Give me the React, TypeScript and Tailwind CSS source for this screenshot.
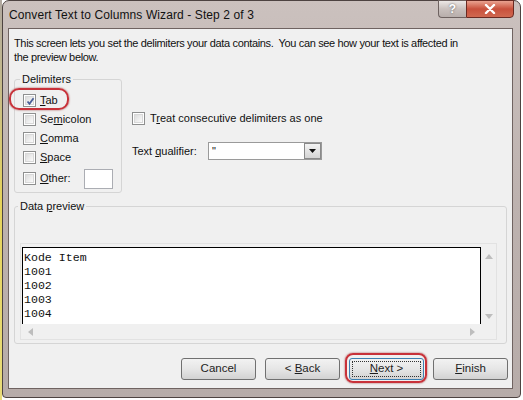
import React from "react";

const ui = { fontFamily: '"Liberation Sans", Arial, sans-serif' };
const mono = { fontFamily: '"Liberation Mono", "Courier New", monospace' };

const Check = ({ checked = false }: { checked?: boolean }) => (
  <div className="w-[13px] h-[13px] shrink-0 border border-[#8e8f8f] bg-white p-[1px]">
    <div className="w-full h-full border border-[#d8d8d8] bg-gradient-to-br from-[#dcdcdc] to-[#fbfbfb] relative">
      {checked && (
        <svg viewBox="0 0 9 9" className="absolute inset-0 w-[9px] h-[9px]">
          <path d="M1.5 4.5 L3.5 6.8 L7.5 1.2" fill="none" stroke="#4a5f97" strokeWidth="1.8" />
        </svg>
      )}
    </div>
  </div>
);

const Btn = ({ children, focus = false }: { children: React.ReactNode; focus?: boolean }) => (
  <div
    className={`w-[75px] h-[22px] rounded-[3px] border ${focus ? "border-[#3c7fb1]" : "border-[#707070]"} bg-gradient-to-b from-[#f2f2f2] via-[#e6e6e6] to-[#d2d2d2] p-[2px]`}
  >
    <div
      className={`w-full h-full flex items-center justify-center text-[11.5px] text-[#1e1e1e] ${focus ? "border border-dotted border-[#333]" : ""}`}
    >
      <span className="whitespace-pre">{children}</span>
    </div>
  </div>
);

const Tri = ({ dir }: { dir: "up" | "down" | "left" | "right" }) => {
  const d = {
    up: "M0 5 L4 0 L8 5 Z",
    down: "M0 0 L8 0 L4 5 Z",
    left: "M5 0 L5 8 L0 4 Z",
    right: "M0 0 L5 4 L0 8 Z",
  }[dir];
  const vert = dir === "up" || dir === "down";
  return (
    <svg viewBox={vert ? "0 0 8 5" : "0 0 5 8"} className={vert ? "w-[8px] h-[5px]" : "w-[5px] h-[8px]"}>
      <path d={d} fill="#bdbdbd" />
    </svg>
  );
};

export default function App() {
  return (
    <div className="w-[523px] h-[400px] bg-white flex overflow-hidden" style={ui}>
      {/* strip of desktop on the left */}
      <div className="w-[2px] h-full bg-gradient-to-b from-[#b0a8a0] via-[#e6d35a] to-[#e9dc7a]" />
      <div className="w-[519px] h-[398px] rounded-t-[7px] rounded-b-[4px] border border-[#4d4341] bg-gradient-to-b from-[#cbc1be] via-[#bdb2af] to-[#b7aca9] flex flex-col">
        {/* title bar */}
        <div className="h-[27px] flex items-start relative">
          <div className="pl-[6px] pt-[5px] text-[12px] text-[#111] whitespace-nowrap tracking-[0.1px]">
            Convert Text to Columns Wizard - Step 2 of 3
          </div>
          <div className="ml-auto mr-[6px] flex -mt-[1px]">
            <div className="w-[28px] h-[18px] rounded-bl-[4px] border border-[#6e6260] border-r-0 bg-gradient-to-b from-[#ece8e6] via-[#c9c0bd] to-[#b8aeab] flex items-center justify-center text-[12px] font-bold text-white [text-shadow:0_0_2px_#555]">
              ?
            </div>
            <div className="w-[48px] h-[18px] rounded-br-[4px] border border-[#6a2a22] bg-gradient-to-b from-[#e9a290] via-[#c8503c] to-[#d06850] flex items-center justify-center">
              <svg viewBox="0 0 12 10" className="w-[12px] h-[10px]">
                <path d="M2 1 L10 9 M10 1 L2 9" stroke="#fff" strokeWidth="2.4" strokeLinecap="round" />
              </svg>
            </div>
          </div>
        </div>

        {/* client area */}
        <div className="ml-[5px] w-[505px] h-[361px] border border-[#6f6361] bg-[#f0f0f0] flex flex-col relative">
          <p className="mt-[7px] pl-[5px] text-[11px] leading-[14px] text-[#111] whitespace-nowrap tracking-[-0.35px]">
            This screen lets you set the delimiters your data contains.&nbsp; You can see how your text is affected in
            <br />
            the preview below.
          </p>

          <div className="flex mt-[8px] ml-[5px]">
            <fieldset className="w-[108px] h-[121px] border border-[#d5d5d5] rounded-[3px] px-[8px] min-w-0">
              <legend className="ml-[-3px] px-[2px] text-[11px] leading-[14px] text-[#111]">Delimiters</legend>
              <div className="mt-[5px] flex flex-col text-[11px] text-[#111]">
                <div className="h-[19px] flex items-center gap-[4px]">
                  <Check checked />
                  <span>
                    <u>T</u>ab
                  </span>
                </div>
                <div className="h-[19px] flex items-center gap-[4px]">
                  <Check />
                  <span>
                    Se<u>m</u>icolon
                  </span>
                </div>
                <div className="h-[19px] flex items-center gap-[4px]">
                  <Check />
                  <span>
                    <u>C</u>omma
                  </span>
                </div>
                <div className="h-[19px] flex items-center gap-[4px]">
                  <Check />
                  <span>
                    <u>S</u>pace
                  </span>
                </div>
                <div className="h-[21px] mt-[1px] flex items-center gap-[4px]">
                  <Check />
                  <span className="w-[41px]">
                    <u>O</u>ther:
                  </span>
                  <div className="w-[30px] h-[20px] border border-[#abadb3] bg-white" />
                </div>
              </div>
            </fieldset>

            <div className="ml-[10px] flex flex-col text-[11px] text-[#111]">
              <div className="mt-[37px] h-[19px] flex items-center gap-[5px]">
                <Check />
                <span>
                  T<u>r</u>eat consecutive delimiters as one
                </span>
              </div>
              <div className="mt-[14px] flex items-center">
                <span className="w-[76px]">
                  Text <u>q</u>ualifier:
                </span>
                <div className="w-[114px] h-[18px] border border-[#9a9a9a] bg-white flex">
                  <div className="flex-1 pl-[3px] leading-[16px] text-[11px]">"</div>
                  <div className="w-[17px] h-full border border-[#8a8a8a] bg-gradient-to-b from-[#f4f4f4] to-[#d4d4d4] flex items-center justify-center">
                    <svg viewBox="0 0 7 4" className="w-[7px] h-[4px]">
                      <path d="M0 0 L7 0 L3.5 4 Z" fill="#111" />
                    </svg>
                  </div>
                </div>
              </div>
            </div>
          </div>

          <fieldset className="mt-[6px] ml-[5px] w-[493px] h-[145px] border border-[#d5d5d5] rounded-[3px] min-w-0">
            <legend className="ml-[3px] px-[2px] text-[11px] leading-[14px] text-[#111]">
              Data <u>p</u>review
            </legend>
            <div className="mt-[30px] ml-[5px] w-[477px] h-[97px] border border-[#e2e2e2] pt-[3px] pl-[1px] flex">
              <div className="flex flex-col">
                <div
                  className="w-[459px] h-[77px] bg-white border-t border-l border-r border-black pt-[3px] pl-[1px] text-[11.6px] leading-[14px] text-[#111] whitespace-pre"
                  style={mono}
                >
                  {"Kode Item\n1001\n1002\n1003\n1004"}
                </div>
                <div className="h-[15px] flex items-center justify-between px-[6px]">
                  <Tri dir="left" />
                  <Tri dir="right" />
                </div>
              </div>
              <div className="w-[15px] h-[77px] flex flex-col items-center justify-between pt-[7px] pb-[5px]">
                <Tri dir="up" />
                <Tri dir="down" />
              </div>
            </div>
          </fieldset>

          <div className="mt-[14px] pr-[4px] flex justify-end gap-[9px]">
            <Btn>Cancel</Btn>
            <Btn>
              &lt; <u>B</u>ack
            </Btn>
            <Btn focus>
              <u>N</u>ext &gt;
            </Btn>
            <Btn>
              <u>F</u>inish
            </Btn>
          </div>

          {/* red annotation rings */}
          <div className="absolute left-0 top-[59px] w-[60px] h-[22px] rounded-[10px] border-2 border-[#c8323a] shadow-[0_0_2px_#a04040]" />
          <div className="absolute left-[336px] top-[324px] w-[82px] h-[30px] rounded-[8px] border-2 border-[#c8323a] shadow-[0_0_2px_#a04040]" />
        </div>
      </div>
    </div>
  );
}
